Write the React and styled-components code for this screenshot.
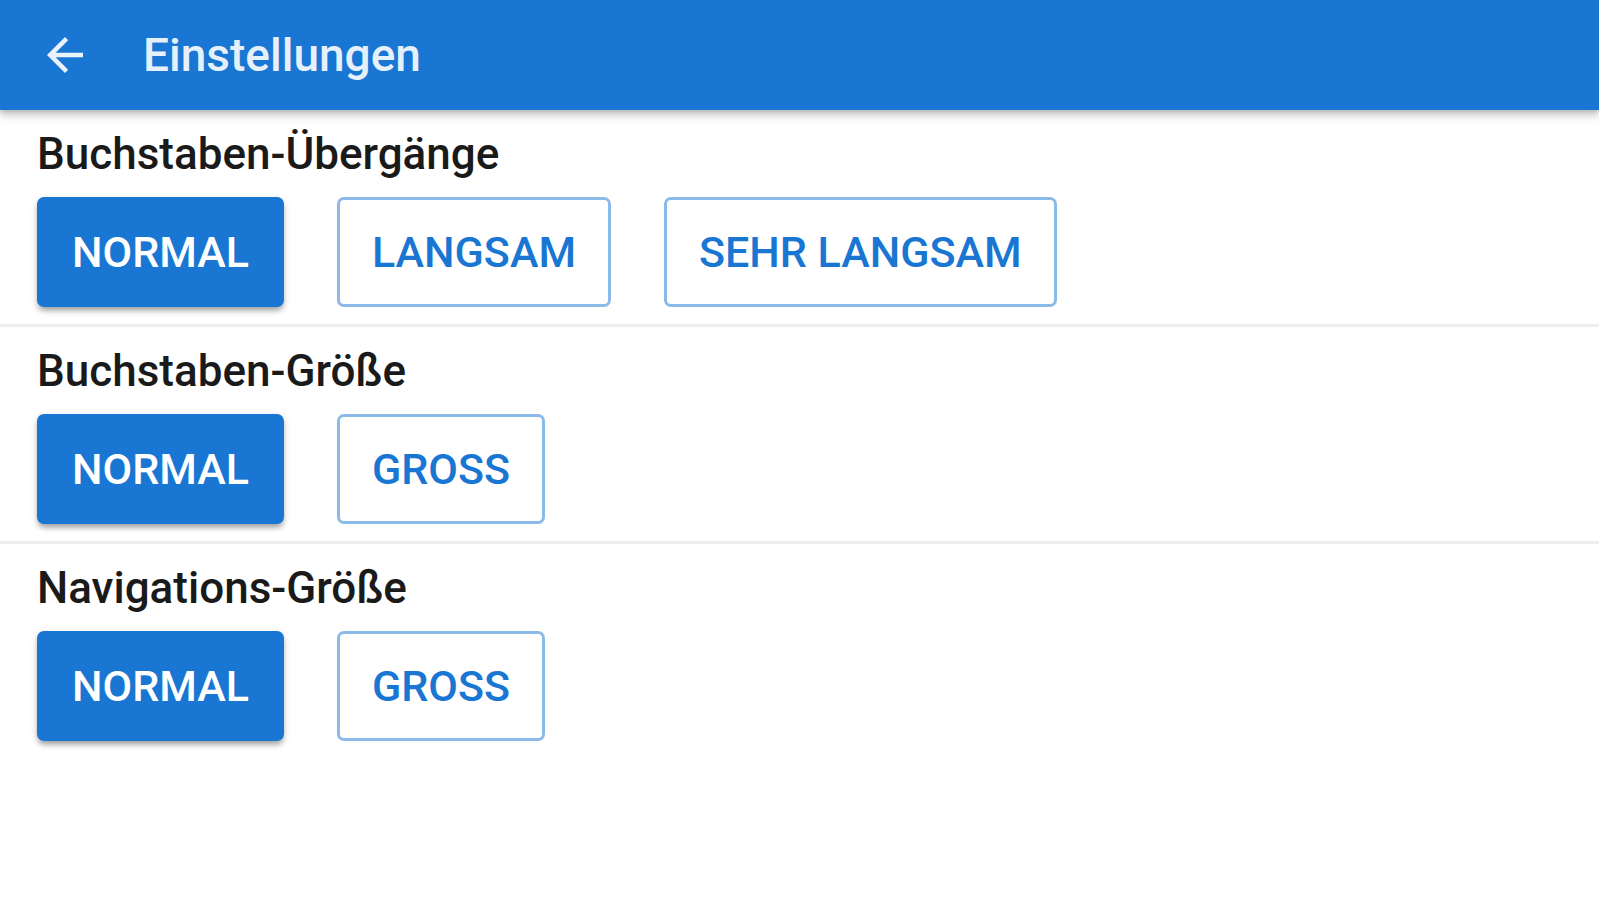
import styled, { createGlobalStyle } from "styled-components";

const GlobalStyle = createGlobalStyle`
	html, body {
		margin: 0;
		padding: 0;
		background: #ffffff;
		font-family: Roboto, "Liberation Sans", sans-serif;
	}
`;

const settings = [
	{
		title: "Buchstaben-Übergänge",
		options: ["NORMAL", "LANGSAM", "SEHR LANGSAM"],
		selected: 0,
	},
	{
		title: "Buchstaben-Größe",
		options: ["NORMAL", "GROSS"],
		selected: 0,
	},
	{
		title: "Navigations-Größe",
		options: ["NORMAL", "GROSS"],
		selected: 0,
	},
];

const BackIcon = () => (
	<svg width="54" height="54" viewBox="0 0 24 24" fill="currentColor">
		<path d="M20 11H7.83l5.59-5.59L12 4l-8 8 8 8 1.41-1.41L7.83 13H20v-2z" />
	</svg>
);

const App = () => {
	return (
		<Page>
			<GlobalStyle />
			<TopBar>
				<BackButton>
					<BackIcon />
				</BackButton>
				<Title>Einstellungen</Title>
			</TopBar>
			{settings.map((group) => (
				<Section key={group.title}>
					<Label>{group.title}</Label>
					<Options>
						{group.options.map((option, i) => (
							<OptionButton key={option} $active={i === group.selected}>
								{option}
							</OptionButton>
						))}
					</Options>
				</Section>
			))}
		</Page>
	);
};

export default App;

const Page = styled.div`
	width: 100%;
	min-height: 900px;
	background: #ffffff;
`;

const TopBar = styled.header`
	position: relative;
	z-index: 1;
	height: 110px;
	display: flex;
	align-items: center;
	padding-left: 38px;
	background-color: #1976d2;
	box-shadow: 0 5px 9px rgba(0, 0, 0, 0.22), 0 2px 4px rgba(0, 0, 0, 0.12);
`;

const BackButton = styled.div`
	display: flex;
	color: #eaf3fc;
`;

const Title = styled.h1`
	margin: 0 0 0 51px;
	font-size: 46px;
	font-weight: 500;
	color: #e6f0fa;
`;

const Section = styled.section`
	padding: 20px 37px 17px;
	border-bottom: 3px solid #eeeeee;

	&:last-child {
		border-bottom: none;
	}
`;

const Label = styled.div`
	font-size: 44px;
	font-weight: 500;
	line-height: 49px;
	color: #1a1a1a;
`;

const Options = styled.div`
	display: flex;
	gap: 53px;
	margin-top: 18px;
`;

const OptionButton = styled.button`
	box-sizing: border-box;
	height: 110px;
	padding: 0 32px;
	border-radius: 7px;
	font-family: Roboto, "Liberation Sans", sans-serif;
	font-size: 43px;
	font-weight: 500;
	letter-spacing: 0;
	cursor: pointer;
	border: 3px solid ${(p) => (p.$active ? "#1976d2" : "#8cbae8")};
	background: ${(p) => (p.$active ? "#1976d2" : "#ffffff")};
	color: ${(p) => (p.$active ? "#ffffff" : "#1976d2")};
	box-shadow: ${(p) =>
		p.$active
			? "0 5px 6px -3px rgba(0,0,0,0.25), 0 4px 5px rgba(0,0,0,0.14), 0 2px 10px rgba(0,0,0,0.1)"
			: "none"};
`;
